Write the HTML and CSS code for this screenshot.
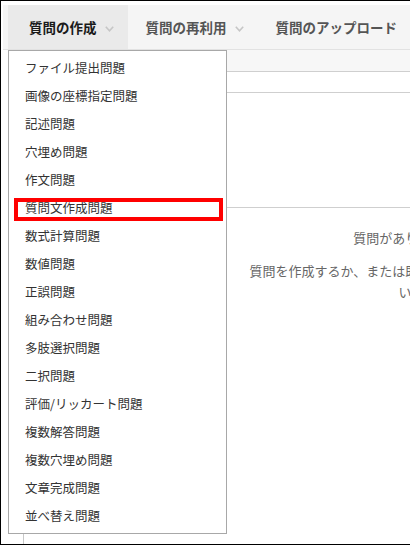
FILE: index.html
```html
<!DOCTYPE html>
<html lang="ja">
<head>
    <meta charset="UTF-8">
    <meta name="viewport" content="width=device-width, initial-scale=1.0">
    <title>質問の作成</title>
    <link rel="stylesheet" href="styles.css">
</head>
<body>
    <div class="frame">
        <div class="tabs">
            <div class="tab active">質問の作成
                <svg class="chevron" width="9" height="6" viewBox="0 0 9 6"><polyline points="0.8,0.8 4.5,4.8 8.2,0.8" fill="none" stroke="#c6c6c6" stroke-width="1.6"/></svg>
            </div>
            <div class="tab">質問の再利用
                <svg class="chevron" width="9" height="6" viewBox="0 0 9 6"><polyline points="0.8,0.8 4.5,4.8 8.2,0.8" fill="none" stroke="#c6c6c6" stroke-width="1.6"/></svg>
            </div>
            <div class="tab">質問のアップロード</div>
        </div>

        <div class="content">
            <div class="toolbar"></div>
            <div class="subbar"></div>
            <div class="area"></div>
            <div class="empty">
                <p>質問がありません。</p>
                <p class="hint">質問を作成するか、または既存の質問を追加してください。</p>
            </div>
        </div>

        <ul class="menu">
            <li>ファイル提出問題</li>
            <li>画像の座標指定問題</li>
            <li>記述問題</li>
            <li>穴埋め問題</li>
            <li>作文問題</li>
            <li class="marked">質問文作成問題</li>
            <li>数式計算問題</li>
            <li>数値問題</li>
            <li>正誤問題</li>
            <li>組み合わせ問題</li>
            <li>多肢選択問題</li>
            <li>二択問題</li>
            <li>評価/リッカート問題</li>
            <li>複数解答問題</li>
            <li>複数穴埋め問題</li>
            <li>文章完成問題</li>
            <li>並べ替え問題</li>
        </ul>
    </div>
</body>
</html>
```

FILE: styles.css
```css
body {
    margin: 0;
    font-family: "Noto Sans CJK JP", "Noto Sans", sans-serif;
    background-color: #fff;
}

.frame {
    position: relative;
    width: 407px;
    height: 539px;
    padding: 4px 0 0 2px;
    border: 1px solid #000;
    overflow: hidden;
    display: flex;
    flex-direction: column;
}

.tabs {
    display: flex;
    align-items: stretch;
    height: 44px;
    background-color: #f5f5f5;
    border-bottom: 1px solid #e2e2e2;
    padding-left: 5px;
    flex-shrink: 0;
}

.tab {
    display: flex;
    align-items: center;
    padding: 0 14px 0 18px;
    font-size: 13.5px;
    font-weight: bold;
    color: #555;
    white-space: nowrap;
}

.tab.active {
    padding-left: 21px;
    background-color: #eaeaea;
    color: #1a1a1a;
}

.chevron {
    margin-left: 8px;
    margin-top: 3px;
}

.content {
    flex: 1;
    margin-left: 20px;
    width: 775px;
    flex-shrink: 0;
    border-left: 1px solid #c8c8c8;
}

.toolbar {
    height: 21px;
    background-color: #f7f7f7;
    border-bottom: 1px solid #cfcfcf;
}

.subbar {
    height: 20px;
    border-bottom: 1px solid #cfcfcf;
}

.area {
    height: 114px;
    border-bottom: 1px solid #cfcfcf;
}

.empty {
    width: 330px;
    margin: 0 auto;
    text-align: center;
    font-size: 13px;
    line-height: 21px;
    color: #666;
}

.empty p {
    margin: 19px 0 0;
}

.empty .hint {
    margin-top: 12px;
}

.menu {
    position: absolute;
    left: 7px;
    top: 49px;
    width: 217px;
    margin: 0;
    padding: 3px 0 3px;
    list-style: none;
    background-color: #fff;
    border: 1px solid #a8a8a8;
}

.menu li {
    position: relative;
    padding-left: 16px;
    font-size: 12.5px;
    line-height: 28px;
    color: #333;
    white-space: nowrap;
}

.menu li.marked::after {
    content: "";
    position: absolute;
    left: 5px;
    top: 4px;
    width: 209px;
    height: 23px;
    border: 4px solid #f00;
    box-sizing: border-box;
}
```
